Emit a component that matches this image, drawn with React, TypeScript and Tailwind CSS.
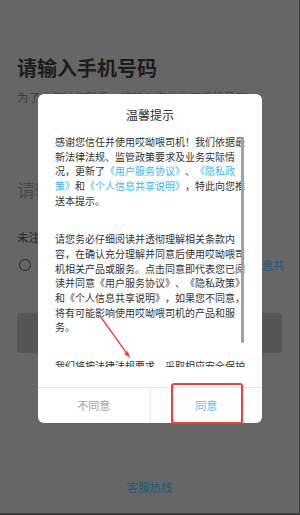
import React from 'react';

const Link: React.FC<{ children: React.ReactNode }> = ({ children }) => (
    <span className="text-[#3fb6ee]">{children}</span>
);

export default function App() {
    return (
        <div className="relative w-[300px] h-[515px] overflow-hidden bg-[#666666] border-r border-b-2 border-[#3c3c3c] font-['Noto_Sans_CJK_SC',sans-serif] [text-spacing-trim:space-all]">
            {/* Login page behind the mask */}
            <div className="flex flex-col h-full px-[17px]">
                <h1 className="mt-[54px] text-[20px] leading-[28px] font-bold text-[#1c1c1c]">请输入手机号码</h1>
                <p className="mt-[7px] text-[11.5px] leading-[16px] text-[#3e3e3e]">为了方便进行联系，请输入您的常用手机号码</p>
                <div className="mt-[72px] text-[18px] leading-[24px] text-[#4a4a4a]">请输入手机号码</div>
                <p className="mt-[28px] text-[11.5px] leading-[16px] text-[#262626]">未注册的手机号验证后将自动创建账号</p>
                <div className="mt-[13px] flex items-start gap-[6px] pl-[2px]">
                    <span className="mt-[1px] w-[12px] h-[12px] shrink-0 rounded-full border border-[#2a2a2a]" />
                    <p className="w-[249px] shrink-0 text-[11.25px] leading-[14px] text-[#262626]">
                        我已阅读并同意<span className="text-[#1f5b78]">《用户服务协议》</span>和<span className="text-[#1f5b78]">《个人信息共享说明》</span>
                    </p>
                </div>
                <button className="mt-[27px] h-[40px] w-full rounded-[4px] bg-[#565656] text-[14px] text-[#6a6a6a]">获取验证码</button>
                <div className="mt-auto mb-[18px] text-center text-[11.5px] leading-[16px] text-[#1f5b78]">客服热线</div>
            </div>

            {/* Dialog */}
            <div className="absolute left-[38px] top-[94px] w-[224px] rounded-[6px] bg-white flex flex-col">
                <h2 className="pt-[13px] text-center text-[12px] leading-[16px] text-[#333333]">温馨提示</h2>
                <div className="relative mt-[12px] ml-[17px] w-[190px] h-[232px] overflow-hidden">
                    <div className="text-[10px] leading-[14.7px] text-[#333333]">
                        <p>
                            感谢您信任并使用哎呦喂司机！我们依据最新法律法规、监管政策要求及业务实际情况，更新了<Link>《用户服务协议》</Link>、<Link>《隐私政策》</Link>和<Link>《个人信息共享说明》</Link>，特此向您推送本提示。
                        </p>
                        <p className="mt-[23.6px]">
                            请您务必仔细阅读并透彻理解相关条款内容，在确认充分理解并同意后使用哎呦喂司机相关产品或服务。点击同意即代表您已阅读并同意《用户服务协议》、《隐私政策》和《个人信息共享说明》，如果您不同意，将有可能影响使用哎呦喂司机的产品和服务。
                        </p>
                        <p className="mt-[23.6px]">
                            我们将按法律法规要求，采取相应安全保护措施，尽力保护您的个人信息安全可控。
                        </p>
                    </div>
                    <div className="absolute right-[1px] top-[2px] w-[3px] h-[206px] rounded-full bg-[#a2a2a2]" />
                </div>
                <div className="mt-[20px] h-[36px] flex border-t border-[#e6e6e6]">
                    <button className="flex-1 text-[11px] text-[#a3a3a3]">不同意</button>
                    <div className="w-px bg-[#e6e6e6]" />
                    <button className="flex-1 text-[11px] text-[#5bc1f2]">同意</button>
                </div>
            </div>

            {/* Annotation: red box around the agree button */}
            <div className="absolute left-[171px] top-[383px] w-[72px] h-[41px] rounded-[3px] border-2 border-[#f23d3d]" />

            {/* Annotation: red arrow */}
            <svg className="absolute inset-0 pointer-events-none" width="300" height="515" viewBox="0 0 300 515">
                <line x1="100" y1="316" x2="127" y2="353.5" stroke="#f04444" strokeWidth="1.3" />
                <polygon points="130,358 123.9,353.8 127.9,350.9" fill="#f04444" />
            </svg>
        </div>
    );
}
